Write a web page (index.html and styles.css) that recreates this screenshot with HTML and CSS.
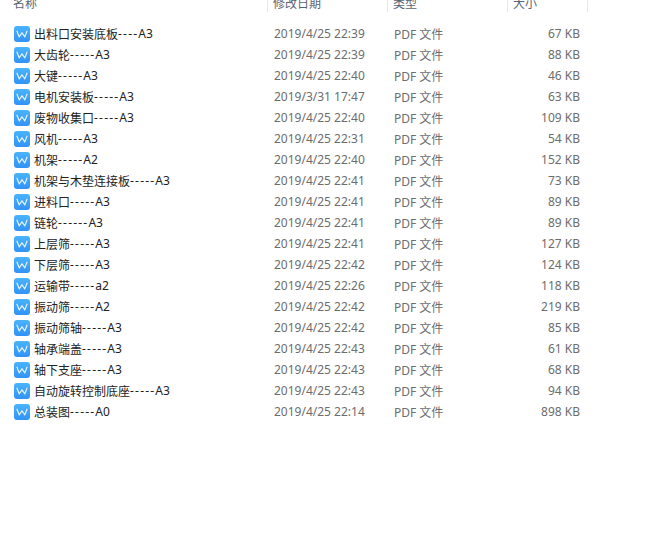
FILE: index.html
```html
<!DOCTYPE html>
<html lang="zh">
<head>
  <meta charset="UTF-8" />
  <title>文件列表</title>
  <link rel="stylesheet" href="styles.css">
</head>
<body>

<svg class="defs" width="0" height="0">
  <defs>
    <linearGradient id="azul" x1="0" y1="0" x2="0" y2="1">
      <stop offset="0" stop-color="#4ab4fb"/>
      <stop offset="1" stop-color="#3192f6"/>
    </linearGradient>
    <symbol id="pdf" viewBox="0 0 16 16">
      <rect width="16" height="16" rx="3" fill="url(#azul)"/>
      <path d="M2.8 4.8 L5.2 10.8 L8 6.8 L10.8 10.8 L13.2 4.8" fill="none" stroke="#e6f4ff" stroke-width="1.15"/>
    </symbol>
  </defs>
</svg>

<div class="cabecera">
  <div class="col-nombre">名称</div>
  <div class="col-fecha">修改日期</div>
  <div class="col-tipo">类型</div>
  <div class="col-tam">大小</div>
</div>

<div class="lista">
  <div class="fila"><div class="col-nombre"><svg class="icono"><use href="#pdf"/></svg>出料口安装底板<span class="guion">----</span>A3</div><div class="col-fecha">2019/4/25 22:39</div><div class="col-tipo">PDF 文件</div><div class="col-tam">67 KB</div></div>
  <div class="fila"><div class="col-nombre"><svg class="icono"><use href="#pdf"/></svg>大齿轮<span class="guion">-----</span>A3</div><div class="col-fecha">2019/4/25 22:39</div><div class="col-tipo">PDF 文件</div><div class="col-tam">88 KB</div></div>
  <div class="fila"><div class="col-nombre"><svg class="icono"><use href="#pdf"/></svg>大键<span class="guion">-----</span>A3</div><div class="col-fecha">2019/4/25 22:40</div><div class="col-tipo">PDF 文件</div><div class="col-tam">46 KB</div></div>
  <div class="fila"><div class="col-nombre"><svg class="icono"><use href="#pdf"/></svg>电机安装板<span class="guion">-----</span>A3</div><div class="col-fecha">2019/3/31 17:47</div><div class="col-tipo">PDF 文件</div><div class="col-tam">63 KB</div></div>
  <div class="fila"><div class="col-nombre"><svg class="icono"><use href="#pdf"/></svg>废物收集口<span class="guion">-----</span>A3</div><div class="col-fecha">2019/4/25 22:40</div><div class="col-tipo">PDF 文件</div><div class="col-tam">109 KB</div></div>
  <div class="fila"><div class="col-nombre"><svg class="icono"><use href="#pdf"/></svg>风机<span class="guion">-----</span>A3</div><div class="col-fecha">2019/4/25 22:31</div><div class="col-tipo">PDF 文件</div><div class="col-tam">54 KB</div></div>
  <div class="fila"><div class="col-nombre"><svg class="icono"><use href="#pdf"/></svg>机架<span class="guion">-----</span>A2</div><div class="col-fecha">2019/4/25 22:40</div><div class="col-tipo">PDF 文件</div><div class="col-tam">152 KB</div></div>
  <div class="fila"><div class="col-nombre"><svg class="icono"><use href="#pdf"/></svg>机架与木垫连接板<span class="guion">-----</span>A3</div><div class="col-fecha">2019/4/25 22:41</div><div class="col-tipo">PDF 文件</div><div class="col-tam">73 KB</div></div>
  <div class="fila"><div class="col-nombre"><svg class="icono"><use href="#pdf"/></svg>进料口<span class="guion">-----</span>A3</div><div class="col-fecha">2019/4/25 22:41</div><div class="col-tipo">PDF 文件</div><div class="col-tam">89 KB</div></div>
  <div class="fila"><div class="col-nombre"><svg class="icono"><use href="#pdf"/></svg>链轮<span class="guion">------</span>A3</div><div class="col-fecha">2019/4/25 22:41</div><div class="col-tipo">PDF 文件</div><div class="col-tam">89 KB</div></div>
  <div class="fila"><div class="col-nombre"><svg class="icono"><use href="#pdf"/></svg>上层筛<span class="guion">-----</span>A3</div><div class="col-fecha">2019/4/25 22:41</div><div class="col-tipo">PDF 文件</div><div class="col-tam">127 KB</div></div>
  <div class="fila"><div class="col-nombre"><svg class="icono"><use href="#pdf"/></svg>下层筛<span class="guion">-----</span>A3</div><div class="col-fecha">2019/4/25 22:42</div><div class="col-tipo">PDF 文件</div><div class="col-tam">124 KB</div></div>
  <div class="fila"><div class="col-nombre"><svg class="icono"><use href="#pdf"/></svg>运输带<span class="guion">-----</span>a2</div><div class="col-fecha">2019/4/25 22:26</div><div class="col-tipo">PDF 文件</div><div class="col-tam">118 KB</div></div>
  <div class="fila"><div class="col-nombre"><svg class="icono"><use href="#pdf"/></svg>振动筛<span class="guion">-----</span>A2</div><div class="col-fecha">2019/4/25 22:42</div><div class="col-tipo">PDF 文件</div><div class="col-tam">219 KB</div></div>
  <div class="fila"><div class="col-nombre"><svg class="icono"><use href="#pdf"/></svg>振动筛轴<span class="guion">-----</span>A3</div><div class="col-fecha">2019/4/25 22:42</div><div class="col-tipo">PDF 文件</div><div class="col-tam">85 KB</div></div>
  <div class="fila"><div class="col-nombre"><svg class="icono"><use href="#pdf"/></svg>轴承端盖<span class="guion">-----</span>A3</div><div class="col-fecha">2019/4/25 22:43</div><div class="col-tipo">PDF 文件</div><div class="col-tam">61 KB</div></div>
  <div class="fila"><div class="col-nombre"><svg class="icono"><use href="#pdf"/></svg>轴下支座<span class="guion">-----</span>A3</div><div class="col-fecha">2019/4/25 22:43</div><div class="col-tipo">PDF 文件</div><div class="col-tam">68 KB</div></div>
  <div class="fila"><div class="col-nombre"><svg class="icono"><use href="#pdf"/></svg>自动旋转控制底座<span class="guion">-----</span>A3</div><div class="col-fecha">2019/4/25 22:43</div><div class="col-tipo">PDF 文件</div><div class="col-tam">94 KB</div></div>
  <div class="fila"><div class="col-nombre"><svg class="icono"><use href="#pdf"/></svg>总装图<span class="guion">-----</span>A0</div><div class="col-fecha">2019/4/25 22:14</div><div class="col-tipo">PDF 文件</div><div class="col-tam">898 KB</div></div>
</div>

</body>
</html>
```

FILE: styles.css
```css
html, body {
  height: 100%;
}
body {
  margin: 0;
  background-color: white;
  font-family: "Noto Sans", "Noto Sans CJK SC", sans-serif;
  font-size: 12px;
  overflow: hidden;
}
.defs {
  display: block;
  height: 0;
}
.cabecera {
  display: flex;
  height: 18px;
  margin-top: -6px;
  color: #5a6472;
  line-height: 20px;
}
.cabecera > div {
  border-right: 1px solid #e6e8ea;
  box-sizing: border-box;
  padding-left: 5px;
}
.cabecera .col-nombre {
  padding-left: 13px;
}
.cabecera .col-tam {
  text-align: left;
}
.lista {
  margin-top: 11px;
  color: #6d6d6d;
}
.fila {
  display: flex;
  align-items: center;
  height: 21px;
}
.fila .col-nombre {
  display: flex;
  align-items: center;
  padding-left: 14px;
  box-sizing: border-box;
  color: #222;
}
.guion {
  letter-spacing: 1.2px;
}
.fila .col-fecha,
.fila .col-tipo {
  padding-left: 6px;
  box-sizing: border-box;
}
.col-nombre {
  width: 268px;
}
.col-fecha {
  width: 120px;
}
.col-tipo {
  width: 120px;
}
.col-tam {
  width: 80px;
  box-sizing: border-box;
  padding-right: 8px;
  text-align: right;
}
.icono {
  width: 16px;
  height: 16px;
  margin-top: 1px;
  margin-right: 4px;
  flex-shrink: 0;
}
```
